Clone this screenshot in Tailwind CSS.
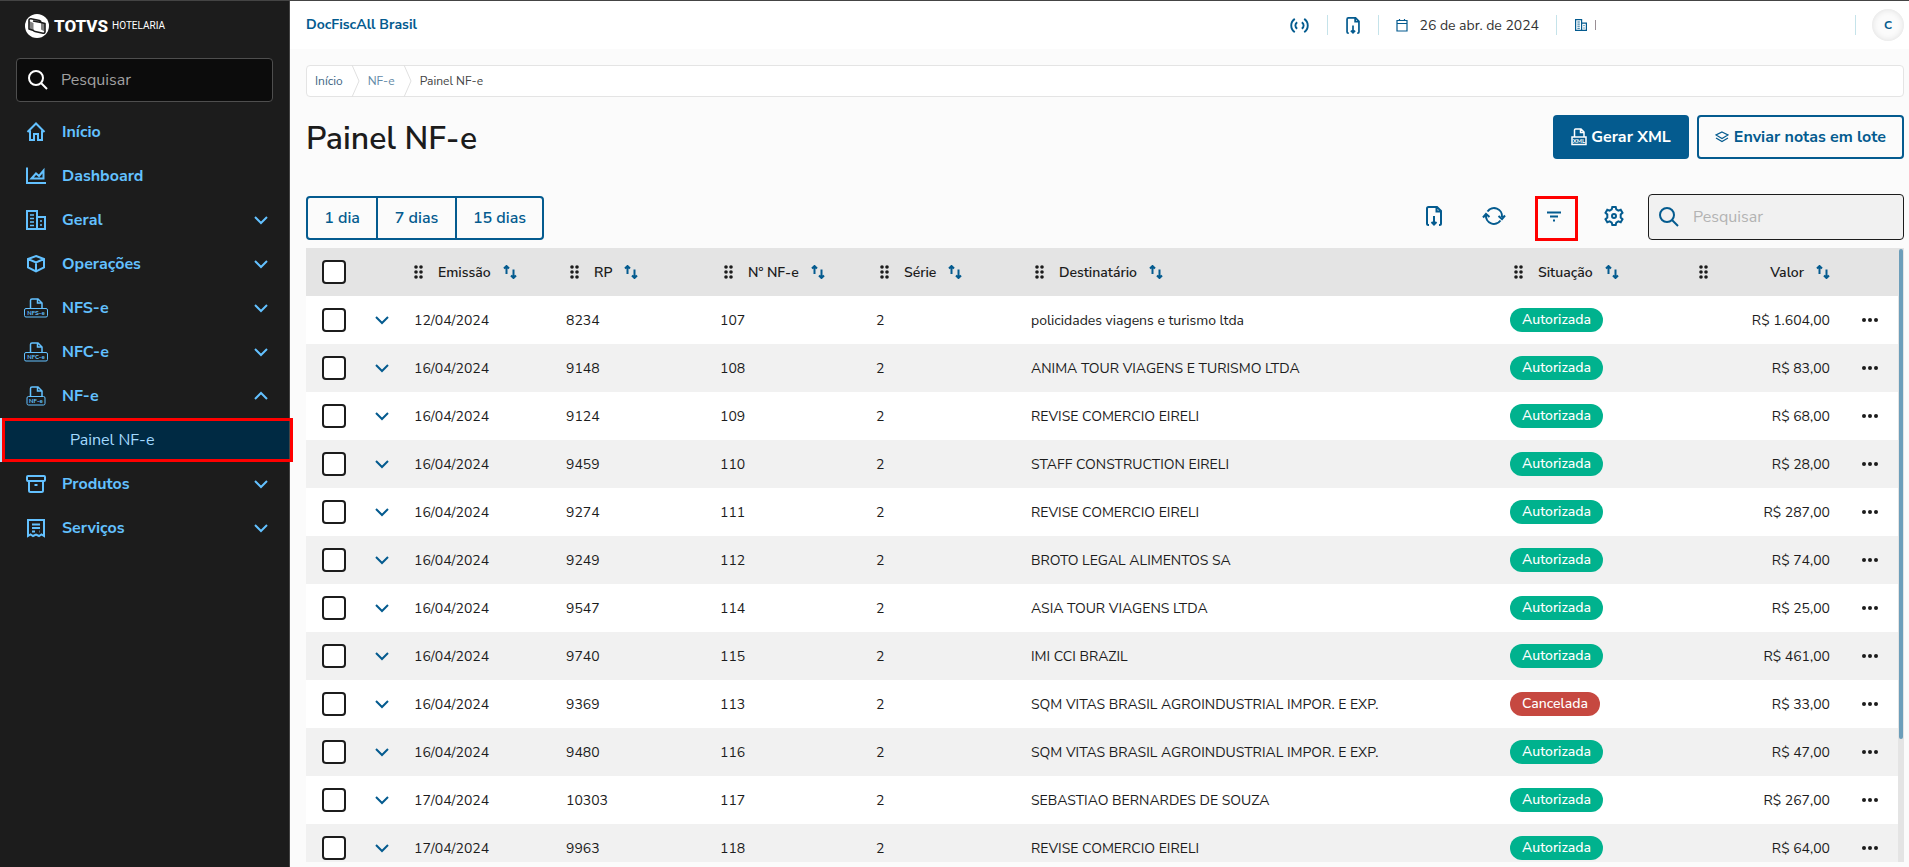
<!DOCTYPE html>
<html lang="pt-BR">
<head>
<meta charset="utf-8">
<title>Painel NF-e</title>
<script src="https://cdn.jsdelivr.net/npm/@tailwindcss/browser@4"></script>
</head>
<body class="flex h-screen overflow-hidden border-t border-[#444] bg-[#fbfbfb] font-['Nunito_Sans','Open_Sans',sans-serif] text-sm text-[#1c1c1c]">

<svg class="hidden" fill="none" stroke="currentColor" stroke-width="2" stroke-linecap="round" stroke-linejoin="round">
  <symbol id="chevron" viewBox="0 0 16 10"><path d="M2 2l6 6 6-6"/></symbol>
  <symbol id="search" viewBox="0 0 20 20"><circle cx="8" cy="8" r="7"/><path d="M13 13l6 6"/></symbol>
  <symbol id="home" viewBox="0 0 20 20"><path d="M1.500 10L10 1.500l8.500 8.500M4 8.500V18h4v-6h4v6h4V8.500"/></symbol>
  <symbol id="chart" viewBox="0 0 20 20"><path stroke-linecap="square" d="M1 2.500V17h18"/><path d="M5.500 12.500l4.500-5 3 2.500 4.500-5.500v8z"/></symbol>
  <symbol id="building" viewBox="0 0 20 20"><path stroke-linejoin="miter" d="M1 1h10v18H1zM11 7h8v12h-8"/><path stroke-linecap="butt" stroke-width="1.500" d="M4 5h4M4 8.500h4M4 12h4M4 15.500h4M14 11h2M14 15h2"/></symbol>
  <symbol id="box" viewBox="0 0 20 20"><path d="M10 2l8 3v8.500L10 17.500l-8-4V5zM2 5l8 3.500L18 5M10 8.500v9"/></symbol>
  <symbol id="archive" viewBox="0 0 20 20"><rect x="1" y="2" width="18" height="5" rx="1"/><path d="M3 7v9.500c0 .8.500 1.500 1.500 1.500h11c1 0 1.500-.7 1.500-1.500V7M8.500 11h3"/></symbol>
  <symbol id="receipt" viewBox="0 0 20 20"><path d="M2 18V2h16v16l-2.500-1.500L13 18l-3-1.500L7 18l-2.500-1.500zM6 6.500h8M6 10h8M6 13.500h3M13.500 13.500h.5"/></symbol>
  <symbol id="filedown" viewBox="0 0 16 20"><path d="M3 19h-.5C1.500 19 1 18.300 1 17.500v-15C1 1.700 1.700 1 2.500 1H11l4 4v12.500c0 .8-.7 1.500-1.500 1.500H13M10.500 1.500v4H15M8 10v8.500M5.500 16l2.500 2.500 2.500-2.500"/></symbol>
  <symbol id="signal" viewBox="0 0 20 18"><path d="M5 2C0 5.500 0 12.500 5 16M15 2c5 3.500 5 10.500 0 14M7.500 5.500c-2.500 2-2.500 5 0 7M12.500 5.500c2.500 2 2.500 5 0 7M10 9h.01"/></symbol>
  <symbol id="calendar" viewBox="0 0 12 14"><path stroke-width="1.200" d="M1 2.500h10v10.500H1zM1 5.500h10M3.500 1v2M8.500 1v2"/><path stroke-width="1" stroke-dasharray="0 2" d="M3.500 8h6M3.500 10.500h6"/></symbol>
  <symbol id="refresh" viewBox="0 0 24 20"><path d="M5.500 5.500a8 8 0 0 1 14.500 5.500M18.500 14.500A8 8 0 0 1 4 9M1 11.500L4 8l3.500 3M16.500 10l3.500 3 3-3.500"/></symbol>
  <symbol id="filter" viewBox="0 0 16 11"><path d="M1 1.500h14M4 5.500h8M7 9.500h2"/></symbol>
  <symbol id="gear" viewBox="0 0 20 20"><path d="M8.300 1h3.400l.6 2.400 2 1.200 2.400-.8 1.800 3-1.800 1.700v3l1.800 1.700-1.800 3-2.400-.8-2 1.200-.6 2.400H8.300l-.6-2.400-2-1.200-2.400.8-1.800-3 1.800-1.700v-3L1.500 6.800l1.800-3 2.400.8 2-1.200z"/><circle cx="10" cy="10" r="2"/></symbol>
  <symbol id="layers" viewBox="0 0 14 12"><path stroke-width="1.200" d="M7 1l6 3-6 3.500L1 4zM1 7l6 3.500L13 7"/></symbol>
  <symbol id="sort" viewBox="0 0 14 14"><path d="M3.500 9V1.500M1 3.500L3.500 1 6 3.500M10.500 4.500v8M8 10.500l2.500 2.500 2.500-2.500"/></symbol>
  <symbol id="grip" viewBox="0 0 9 14"><g fill="currentColor" stroke="none"><circle cx="2" cy="2" r="1.800"/><circle cx="7" cy="2" r="1.800"/><circle cx="2" cy="7" r="1.800"/><circle cx="7" cy="7" r="1.800"/><circle cx="2" cy="12" r="1.800"/><circle cx="7" cy="12" r="1.800"/></g></symbol>
  <symbol id="dots" viewBox="0 0 16 4"><g fill="currentColor" stroke="none"><circle cx="2" cy="2" r="2"/><circle cx="8" cy="2" r="2"/><circle cx="14" cy="2" r="2"/></g></symbol>
  <symbol id="paper" viewBox="0 0 24 20"><path stroke-width="1.500" d="M6.500 10V2.500C6.500 1.500 7 1 8 1h6l4 4v5M13.500 1.500V5H18"/></symbol>
</svg>

<aside class="w-[290px] shrink-0 border-r border-[#444] bg-[#1c1c1c] text-[#63c1ff]">
  <div class="flex h-[57px] items-center gap-1 pb-[7px] pl-[25px] text-white">
    <svg class="mr-px size-6" viewBox="0 0 24 24"><circle cx="12" cy="12" r="12" fill="#fff"/><path fill="none" stroke="#1c1c1c" stroke-width="1.600" stroke-linejoin="round" d="M8.500 16.500L4 15V6.500Q4 4.500 6 4.800l8.500 1.700Q16 7 16 8.500l4 1v8q0 2-2 1.700L10 17.500q-1.500-.3-1.500-1zM16 8.500L8 7"/><path fill="#1c1c1c" d="M4 7l4.500 2v7.500L5 15.300zM16 8.500l4 1-.5 8-3.500-2z" opacity=".55"/></svg>
    <span class="font-['Roboto'] text-[17px] font-extrabold">TOTVS</span>
    <span class="font-['Roboto'] text-[10px]">HOTELARIA</span>
  </div>
  <label class="mx-4 flex h-11 items-center gap-[13px] rounded border border-[#4e4e4e] bg-[#0c0c0c] pl-[11px] text-white">
    <svg class="size-5 fill-none stroke-current stroke-2"><use href="#search"/></svg>
    <input type="text" placeholder="Pesquisar" aria-label="Pesquisar no menu" class="min-w-0 flex-1 bg-transparent text-base outline-none placeholder:text-[#a1a1a1]">
  </label>
  <nav id="menu" class="mt-2 text-base font-bold"></nav>
</aside>

<div class="flex min-w-0 flex-1 flex-col">
  <header class="flex h-12 shrink-0 items-center bg-white pl-4 pr-[5px] text-[#045b8f]">
    <a href="#" class="mr-auto text-sm font-bold">DocFiscAll Brasil</a>
    <button aria-label="Conexão" class="px-[18px]"><svg class="h-[17px] w-[19px] fill-none stroke-current stroke-2"><use href="#signal"/></svg></button>
    <span class="h-5 w-px bg-[#c5e3ea]"></span>
    <button aria-label="Baixar" class="px-[18px]"><svg class="h-[17px] w-[14px] fill-none stroke-current stroke-2"><use href="#filedown"/></svg></button>
    <span class="h-5 w-px bg-[#c5e3ea]"></span>
    <span class="flex items-center gap-3 px-[17px]"><svg class="h-[14px] w-3 fill-none stroke-current"><use href="#calendar"/></svg><span class="pt-0.5 text-[#333]">26 de abr. de 2024</span></span>
    <span class="h-5 w-px bg-[#c5e3ea]"></span>
    <span class="flex w-[298px] items-center gap-2 pl-[18px]"><svg class="size-3 fill-none stroke-current stroke-2"><use href="#building"/></svg><span class="h-2.5 w-px bg-[#9a8f95]"></span></span>
    <span class="h-5 w-px bg-[#c5e3ea]"></span>
    <button aria-label="Perfil" class="ml-4 size-8 rounded-full bg-[#fbfbfb] text-xs font-bold shadow-[inset_0_0_6px_#ddd]">C</button>
  </header>

  <main class="flex min-h-0 flex-1 flex-col pb-[5px] pl-4 pr-[5px] pt-4">
    <nav aria-label="Trilha" class="flex h-8 shrink-0 items-center rounded border border-[#e4e4e4] bg-white pl-2 text-xs">
      <a href="#" class="text-[#3d6584]">Início</a>
      <svg class="ml-2 h-8 w-[9px] fill-none stroke-[#e0e0e0]" viewBox="0 0 9 32"><path d="M1 0l7 16-7 16"/></svg>
      <a href="#" class="ml-2 text-[#6189a6]">NF-e</a>
      <svg class="ml-2 h-8 w-[9px] fill-none stroke-[#e0e0e0]" viewBox="0 0 9 32"><path d="M1 0l7 16-7 16"/></svg>
      <span class="ml-2 text-[#444]">Painel NF-e</span>
    </nav>

    <div class="mt-[18px] flex h-11 shrink-0 items-center gap-2 text-base font-bold text-[#045b8f]">
      <h1 class="mr-auto pt-1 text-[32px] font-semibold leading-10 text-[#1c1c1c]">Painel NF-e</h1>
      <button class="flex h-11 items-center gap-1 rounded bg-[#045b8f] px-[18px] text-white">
        <svg class="h-[18px] w-4 fill-none stroke-current" viewBox="0 0 16 18"><path d="M3.500 9V2c0-.6.400-1 1-1h5.500l3 3v5M9.500 1.500V4.500h3.500M1 9h14v7.500H1z" stroke-width="1.500"/><text x="8" y="15" text-anchor="middle" font-size="6" font-weight="700" fill="currentColor" stroke="none">XML</text></svg>
        Gerar XML
      </button>
      <button class="flex h-11 items-center gap-[5px] rounded border-2 border-[#045b8f] px-4">
        <svg class="h-3 w-[14px] fill-none stroke-current"><use href="#layers"/></svg>
        Enviar notas em lote
      </button>
    </div>

    <div class="mt-[35px] flex h-[46px] shrink-0 items-end text-[#045b8f]">
      <div class="mr-auto flex h-11 divide-x-2 divide-[#045b8f] rounded border-2 border-[#045b8f] text-base font-semibold">
        <button class="w-[70px]">1 dia</button>
        <button class="w-[79px]">7 dias</button>
        <button class="w-[85px]">15 dias</button>
      </div>
      <div class="mr-3 flex gap-4 self-start">
        <button aria-label="Exportar" class="grid size-11 place-items-center"><svg class="h-5 w-4 fill-none stroke-current stroke-2"><use href="#filedown"/></svg></button>
        <button aria-label="Atualizar" class="grid size-11 place-items-center"><svg class="h-5 w-6 fill-none stroke-current stroke-2"><use href="#refresh"/></svg></button>
        <button aria-label="Filtrar" class="relative grid size-11 place-items-center"><svg class="h-[11px] w-4 fill-none stroke-current stroke-2"><use href="#filter"/></svg><span class="absolute -right-0.5 left-[3px] top-0.5 -bottom-[3px] border-3 border-[#f00]"></span></button>
        <button aria-label="Configurar" class="grid size-11 place-items-center"><svg class="size-5 fill-none stroke-current stroke-2"><use href="#gear"/></svg></button>
      </div>
      <label class="flex h-[46px] w-64 items-center gap-3.5 rounded border border-[#1c1c1c] bg-[#f1f1f1] pl-[10px]">
        <svg class="size-5 fill-none stroke-current stroke-2"><use href="#search"/></svg>
        <input type="text" placeholder="Pesquisar" aria-label="Pesquisar notas" class="min-w-0 flex-1 bg-transparent text-base outline-none placeholder:text-[#b3b3b3]">
      </label>
    </div>

    <div class="mt-2 flex min-h-0 flex-1">
      <div class="min-w-0 flex-1 overflow-hidden">
        <table class="w-full table-fixed text-sm">
          <colgroup><col class="w-14"><col class="w-10"><col class="w-[152px]"><col class="w-[154px]"><col class="w-[156px]"><col class="w-[155px]"><col><col class="w-[185px]"><col class="w-[159px]"><col class="w-14"></colgroup>
          <thead><tr id="head" class="h-12 bg-[#e4e4e4] text-left"></tr></thead>
          <tbody id="rows"></tbody>
        </table>
      </div>
      <div class="w-1.5 bg-[#e4e4e4] px-px pt-px"><div class="h-[80%] rounded-full bg-[#6c9eba]"></div></div>
    </div>
  </main>
</div>

<script>
const icon = (id) => `<svg class="size-5 fill-none stroke-current stroke-2"><use href="#${id}"/></svg>`;
const fiscal = (t, w) => `<svg class="h-5 w-6 fill-none stroke-current" viewBox="0 0 24 20"><use href="#paper"/><rect x="${12 - w / 2}" y="10.500" width="${w}" height="8.500" rx="1.500"/><text x="12" y="17" text-anchor="middle" font-size="6" font-weight="700" fill="currentColor" stroke="none">${t}</text></svg>`;
const chevron = '<svg class="h-[10px] w-4 fill-none stroke-current stroke-2"><use href="#chevron"/></svg>';
const chevronUp = '<svg class="h-[10px] w-4 rotate-180 fill-none stroke-current stroke-2"><use href="#chevron"/></svg>';
const item = (ic, name, arrow = '') => `<a href="#" class="flex h-11 items-center pl-6 pr-5"><span class="mr-[14px] grid w-6 place-items-center">${ic}</span><span class="mr-auto">${name}</span>${arrow}</a>`;
document.getElementById('menu').innerHTML =
  item(icon('home'), 'Início') + item(icon('chart'), 'Dashboard') + item(icon('building'), 'Geral', chevron) +
  item(icon('box'), 'Operações', chevron) + item(fiscal('NFS-e', 23), 'NFS-e', chevron) +
  item(fiscal('NFC-e', 23), 'NFC-e', chevron) + item(fiscal('NF-e', 18), 'NF-e', chevronUp) +
  '<a href="#" class="relative flex h-11 items-center border-l-4 border-[#b9e3ff] bg-[#002a43] pl-[66px] font-normal text-[#a3daff]">Painel NF-e<span class="absolute inset-y-0 -right-1 -left-0.5 border-3 border-[#f00]"></span></a>' +
  item(icon('archive'), 'Produtos', chevron) + item(icon('receipt'), 'Serviços', chevron);

const grip = '<svg class="h-[14px] w-[9px] shrink-0"><use href="#grip"/></svg>';
const sort = '<svg class="size-[14px] shrink-0 fill-none stroke-[#045b8f] stroke-2"><use href="#sort"/></svg>';
const check = (l) => `<td class="pl-4"><input type="checkbox" aria-label="${l}" class="block size-6 appearance-none rounded border-2 border-[#1c1c1c] bg-white"></td>`;
const names = ['Emissão', 'RP', 'Nº NF-e', 'Série', 'Destinatário', 'Situação', 'Valor'];
document.getElementById('head').innerHTML = check('Selecionar todas') + '<td></td>' + names.map((n, i) =>
  `<th class="${i === 0 ? 'pl-3' : 'pl-4'} ${n === 'Valor' ? 'pr-3' : ''} font-semibold"><div class="flex items-center">${grip}<span class="${n === 'Valor' ? 'ml-auto' : 'ml-[15px]'} mr-3 pt-0.5">${n}</span>${sort}</div></th>`).join('') + '<td></td>';

const data = [
  ['12/04/2024', '8234', '107', 'policidades viagens e turismo ltda', '1.604,00'],
  ['16/04/2024', '9148', '108', 'ANIMA TOUR VIAGENS E TURISMO LTDA', '83,00'],
  ['16/04/2024', '9124', '109', 'REVISE COMERCIO EIRELI', '68,00'],
  ['16/04/2024', '9459', '110', 'STAFF CONSTRUCTION EIRELI', '28,00'],
  ['16/04/2024', '9274', '111', 'REVISE COMERCIO EIRELI', '287,00'],
  ['16/04/2024', '9249', '112', 'BROTO LEGAL ALIMENTOS SA', '74,00'],
  ['16/04/2024', '9547', '114', 'ASIA TOUR VIAGENS LTDA', '25,00'],
  ['16/04/2024', '9740', '115', 'IMI CCI BRAZIL', '461,00'],
  ['16/04/2024', '9369', '113', 'SQM VITAS BRASIL AGROINDUSTRIAL IMPOR. E EXP.', '33,00', true],
  ['16/04/2024', '9480', '116', 'SQM VITAS BRASIL AGROINDUSTRIAL IMPOR. E EXP.', '47,00'],
  ['17/04/2024', '10303', '117', 'SEBASTIAO BERNARDES DE SOUZA', '267,00'],
  ['17/04/2024', '9963', '118', 'REVISE COMERCIO EIRELI', '64,00'],
];
document.getElementById('rows').innerHTML = data.map(([d, rp, nf, dest, v, canceled]) =>
  `<tr class="h-12 bg-white even:bg-[#f1f1f1]">${check('Selecionar nota ' + nf)}
  <td class="pl-3"><button aria-label="Expandir" class="block text-[#045b8f]">${chevron}</button></td>
  <td class="pl-3 pt-0.5">${d}</td><td class="pl-3 pt-0.5">${rp}</td><td class="pl-3 pt-0.5">${nf}</td><td class="pl-3 pt-0.5">2</td><td class="pl-3 pt-0.5">${dest}</td>
  <td class="pl-3"><span class="${canceled ? 'bg-[#c64840]' : 'bg-[#00b28e]'} inline-flex h-6 items-center rounded-full px-3 font-medium text-white">${canceled ? 'Cancelada' : 'Autorizada'}</span></td>
  <td class="pr-3 pt-0.5 text-right">R$ ${v}</td>
  <td class="pl-5"><button aria-label="Ações" class="block"><svg class="h-1 w-4"><use href="#dots"/></svg></button></td></tr>`).join('');
</script>
</body>
</html>
